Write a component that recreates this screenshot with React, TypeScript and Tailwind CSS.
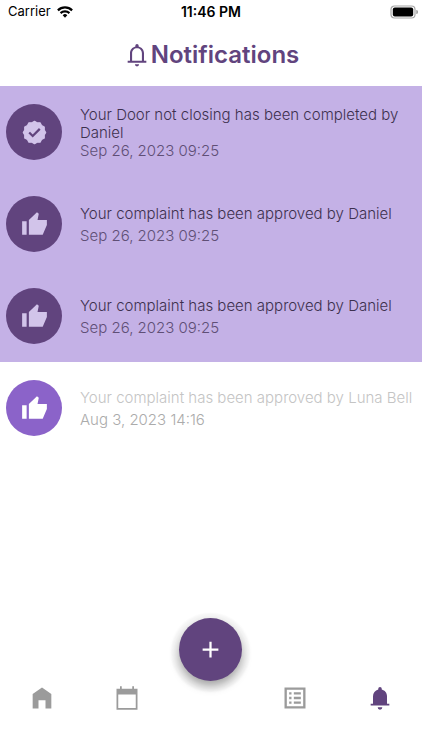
import type { ReactNode } from "react";

type IconProps = {
    className?: string;
};

type Notification = {
    id: number;
    kind: "completed" | "approved";
    message: string;
    date: string;
    unread: boolean;
};

const notifications: Notification[] = [
    {
        id: 1,
        kind: "completed",
        message: "Your Door not closing has been completed by Daniel",
        date: "Sep 26, 2023 09:25",
        unread: true,
    },
    {
        id: 2,
        kind: "approved",
        message: "Your complaint has been approved by Daniel",
        date: "Sep 26, 2023 09:25",
        unread: true,
    },
    {
        id: 3,
        kind: "approved",
        message: "Your complaint has been approved by Daniel",
        date: "Sep 26, 2023 09:25",
        unread: true,
    },
    {
        id: 4,
        kind: "approved",
        message: "Your complaint has been approved by Luna Bell",
        date: "Aug 3, 2023 14:16",
        unread: false,
    },
];

function Icon({ className = "size-7", children }: IconProps & { children: ReactNode }) {
    return (
        <svg viewBox="0 0 24 24" fill="currentColor" aria-hidden="true" className={className}>
            {children}
        </svg>
    );
}

function BellOutlineIcon({ className }: IconProps) {
    return (
        <Icon className={className}>
            <path
                fillRule="evenodd"
                d="M18 17v-6.5c0-2.9-1.9-5.1-4.6-5.8V3.9a1.4 1.4 0 0 0-2.8 0v.8C7.9 5.4 6 7.6 6 10.5V17H4v1.7h16V17h-2zM7.8 17v-6.500C7.800 8 9.500 6.200 12 6.200s4.200 1.800 4.200 4.300V17H7.800zM10.200 20h3.600a1.800 1.800 0 0 1-3.600 0z"
            />
        </Icon>
    );
}

function BellIcon({ className }: IconProps) {
    return (
        <Icon className={className}>
            <path d="M18 17v-6.5c0-2.900-1.800-5.100-4.500-5.800V4a1.500 1.500 0 0 0-3 0v.7C7.800 5.400 6 7.600 6 10.500V17H4v1.500h16V17h-2zM10 20h4a2 2 0 0 1-4 0z" />
        </Icon>
    );
}

function SealCheckIcon({ className }: IconProps) {
    return (
        <Icon className={className}>
            <path
                stroke="currentColor"
                strokeWidth="1"
                strokeLinejoin="round"
                d="M12 2l2.300 1.300L17 3.300l1.300 2.400L20.700 7v2.700L22 12l-1.300 2.300V17l-2.400 1.300L17 20.700h-2.700L12 22l-2.300-1.300H7l-1.300-2.400L3.300 17v-2.700L2 12l1.300-2.300V7l2.400-1.300L7 3.300h2.700z"
            />
            <path fill="none" stroke="#61447e" strokeWidth="2" d="M7.300 12l3.100 3.100 6.300-6.300" />
        </Icon>
    );
}

function ThumbUpIcon({ className }: IconProps) {
    return (
        <Icon className={className}>
            <path d="M1 9h4v12H1V9zM23 8v4.500L19.300 21H7V8.100L14.200 1l1.600 1.500L14.700 8H23z" />
        </Icon>
    );
}

function HomeIcon({ className }: IconProps) {
    return (
        <Icon className={className}>
            <path d="M4 21V8.500l8-5.500 8 5.500V21h-5v-7H9v7H4z" />
        </Icon>
    );
}

function CalendarIcon({ className }: IconProps) {
    return (
        <Icon className={className}>
            <path fillRule="evenodd" d="M3 4h3V2h1.500v2h9V2H18v2h3v18H3V4zm1.500 5v11.500h15V9h-15z" />
        </Icon>
    );
}

function ListIcon({ className }: IconProps) {
    return (
        <Icon className={className}>
            <path
                fillRule="evenodd"
                d="M3 3h18v18H3V3zm2 2v14h14V5H5zm2 2h2v2H7V7zm4 0h6v2h-6V7zm-4 4h2v2H7v-2zm4 0h6v2h-6v-2zm-4 4h2v2H7v-2zm4 0h6v2h-6v-2z"
            />
        </Icon>
    );
}

function StatusBar() {
    return (
        <div className="grid grid-cols-3 items-center h-6 px-2 text-black">
            <div className="flex items-center gap-1 text-[13px]">
                Carrier
                <svg viewBox="0 0 18 13" fill="none" stroke="currentColor" strokeWidth="2.400" aria-hidden="true" className="w-5 h-3">
                    <path d="M1.300 4.700a11 11 0 0 1 15.400 0M4.200 7.700a6.900 6.900 0 0 1 9.600 0" />
                    <path d="M9 12.600l-2.500-2.700a3.600 3.600 0 0 1 5 0z" fill="currentColor" stroke="none" />
                </svg>
            </div>
            <p className="text-center text-sm font-semibold">11:46 PM</p>
            <svg viewBox="0 0 28 14" aria-hidden="true" className="w-7 h-3.5 -mr-1 justify-self-end">
                <rect x="1" y="1" width="24" height="12" rx="3.500" fill="none" stroke="#a6a6a6" strokeWidth="1.200" />
                <rect x="2.800" y="2.600" width="20.400" height="8.800" rx="2" />
                <path d="M26.200 5v4a2 2 0 0 0 0-4z" fill="#a6a6a6" />
            </svg>
        </div>
    );
}

function NotificationRow({ item }: { item: Notification }) {
    const KindIcon = item.kind === "completed" ? SealCheckIcon : ThumbUpIcon;

    return (
        <li className={`flex items-center gap-[18px] min-h-23 pl-1.5 ${item.unread ? "bg-[#c4b1e6]" : "bg-white"}`}>
            <span
                className={`flex items-center justify-center shrink-0 size-14 rounded-full ${
                    item.unread ? "bg-[#61447e] text-[#d2c4ea]" : "bg-[#8b63c9] text-white"
                }`}
            >
                <KindIcon className="size-[27px]" />
            </span>
            <div
                className={`flex flex-col min-w-0 pt-0.5 text-[15px] leading-[18px] font-light ${
                    item.kind === "approved" ? "gap-1" : ""
                }`}
            >
                <p className={item.unread ? "text-[#3d304e]" : "text-[#c4c4c4]"}>{item.message}</p>
                <p className={item.unread ? "text-[#5f4f76]" : "text-[#ababab]"}>{item.date}</p>
            </div>
        </li>
    );
}

function BottomNav() {
    return (
        <nav className="grid grid-cols-5 items-center justify-items-center h-26 text-[#9b9b9b]">
            <a href="#home" aria-label="Home">
                <HomeIcon />
            </a>
            <a href="#calendar" aria-label="Calendar">
                <CalendarIcon />
            </a>
            <button
                type="button"
                aria-label="Add"
                className="flex items-center justify-center size-[63px] -mt-[98px] rounded-full bg-[#61447e] text-white shadow-[0_5px_10px_rgba(0,0,0,0.35),0_3px_2px_8px_rgba(0,0,0,0.03)]"
            >
                <svg viewBox="0 0 24 24" stroke="currentColor" strokeWidth="2" aria-hidden="true" className="size-[27px]">
                    <path d="M12 5v14M5 12h14" />
                </svg>
            </button>
            <a href="#requests" aria-label="Requests">
                <ListIcon />
            </a>
            <a href="#notifications" aria-label="Notifications" aria-current="page" className="text-[#61447e]">
                <BellIcon />
            </a>
        </nav>
    );
}

export default function App() {
    return (
        <div className="flex flex-col min-h-screen bg-white font-[Inter,sans-serif]">
            <StatusBar />
            <header className="flex items-center justify-center h-[62px] text-[#61447e]">
                <BellOutlineIcon className="size-7" />
                <h1 className="text-2xl font-semibold">Notifications</h1>
            </header>
            <main className="flex-1">
                <ul>
                    {notifications.map((item) => (
                        <NotificationRow key={item.id} item={item} />
                    ))}
                </ul>
            </main>
            <BottomNav />
        </div>
    );
}
